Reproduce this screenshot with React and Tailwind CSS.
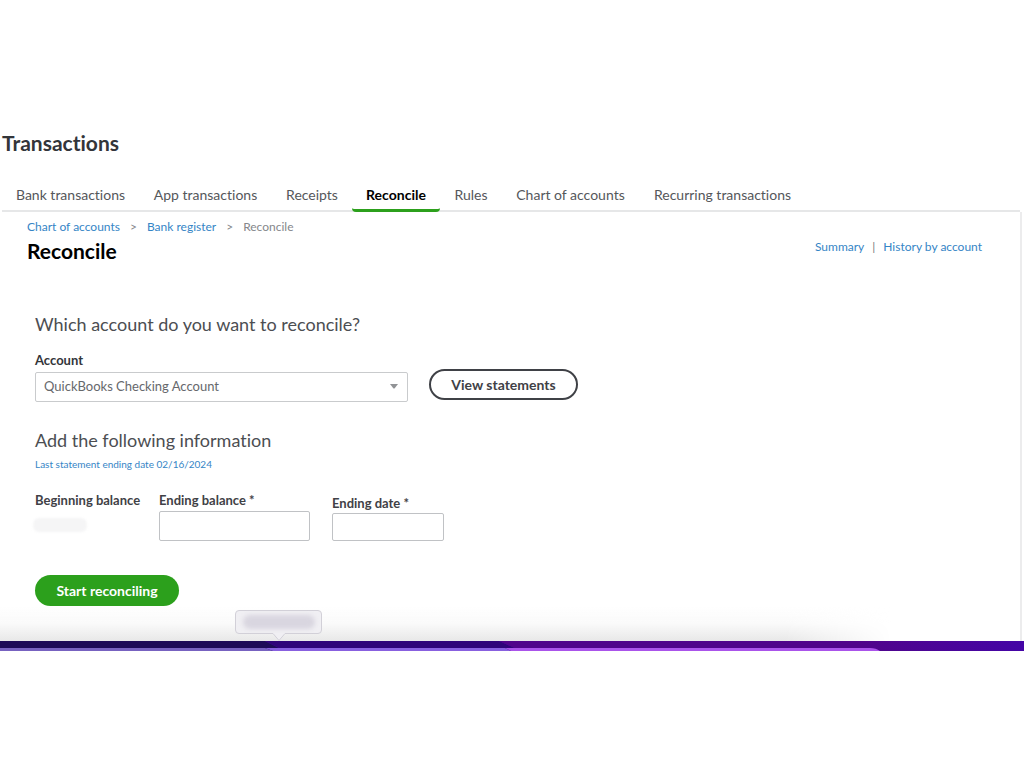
import React, { useState } from 'react';

const tabs = [
  { label: 'Bank transactions', width: 'w-[137px]' },
  { label: 'App transactions', width: 'w-[133px]' },
  { label: 'Receipts', width: 'w-20' },
  { label: 'Reconcile', width: 'w-[88px]' },
  { label: 'Rules', width: 'w-[62px]' },
  { label: 'Chart of accounts', width: 'w-[137px]' },
  { label: 'Recurring transactions', width: 'w-[167px]' },
];

function Tabs({ active }) {
  return (
    <nav className="mt-6 ml-0.5 mr-1 flex border-b-2 border-[#e6e7e8]">
      {tabs.map((tab) => (
        <a
          key={tab.label}
          href="#"
          className={`${tab.width} -mb-0.5 shrink-0 whitespace-nowrap rounded-sm border-b-3 text-center text-[14px] leading-7 ${
            tab.label === active ? 'border-[#2ca01c] font-bold text-black' : 'border-transparent text-[#55575b]'
          }`}
        >
          {tab.label}
        </a>
      ))}
    </nav>
  );
}

function PageHeader() {
  return (
    <div className="flex items-start justify-between pl-[25px] pr-[38px]">
      <div>
        <div className="flex gap-2.5 text-[12px] leading-5 text-[#85878b]">
          <a href="#" className="text-[#3585c6]">Chart of accounts</a>
          <span>&gt;</span>
          <a href="#" className="text-[#3585c6]">Bank register</a>
          <span>&gt;</span>
          <span>Reconcile</span>
        </div>
        <h2 className="text-[21px] font-bold leading-7 text-black">Reconcile</h2>
      </div>
      <div className="mt-5 flex gap-2 text-[12px] leading-5 text-[#77797d]">
        <a href="#" className="text-[#3585c6]">Summary</a>
        <span>|</span>
        <a href="#" className="text-[#3585c6]">History by account</a>
      </div>
    </div>
  );
}

function ReconcileForm() {
  const [account, setAccount] = useState('checking');

  return (
    <form className="mt-[45px] pl-[33px]">
      <h3 className="text-[18px] leading-7 text-[#4c4e52]">Which account do you want to reconcile?</h3>

      <div className="mt-3 flex items-end">
        <div className="w-[373px]">
          <label htmlFor="account" className="block text-[13px] font-bold leading-5 text-[#33353a]">Account</label>
          <div className="relative mt-0.5">
            <select
              id="account"
              value={account}
              onChange={(e) => setAccount(e.target.value)}
              className="h-[30px] w-full appearance-none rounded-[2px] border border-[#c9cbcd] bg-white px-2 text-[13px] text-[#66686c]"
            >
              <option value="checking">QuickBooks Checking Account</option>
            </select>
            <svg viewBox="0 0 8 5" className="pointer-events-none absolute right-2.5 top-3 h-[5px] w-2">
              <path d="M0 0h8L4.5 4.6h-1z" fill="#919396" />
            </svg>
          </div>
        </div>
        <button type="button" className="mb-0.5 ml-[21px] h-[31px] w-[149px] rounded-full border-2 border-[#3f4146] text-[14px] font-bold leading-5 text-[#3f4146]">
          View statements
        </button>
      </div>

      <h3 className="mt-6 text-[18px] leading-7 text-[#4c4e52]">Add the following information</h3>
      <a href="#" className="block text-[10px] leading-5 text-[#3585c6]">Last statement ending date 02/16/2024</a>

      <div className="mt-4 flex items-end text-[13px] font-bold leading-5 text-[#3f4146]">
        <div className="w-[124px] self-start">
          <span className="block">Beginning balance</span>
          <div className="-ml-0.5 mt-2 h-3.5 w-[54px] rounded-md bg-[#f5f5f6] blur-[1px]" />
        </div>
        <div className="w-[151px]">
          <label htmlFor="ending-balance" className="block">Ending balance *</label>
          <input id="ending-balance" type="text" className="mt-px block h-[30px] w-full rounded-[2px] border border-[#c0c2c5] bg-white px-2" />
        </div>
        <div className="ml-[22px] w-28">
          <label htmlFor="ending-date" className="block">Ending date *</label>
          <input id="ending-date" type="text" className="block h-7 w-full rounded-[2px] border border-[#c0c2c5] bg-white px-2" />
        </div>
      </div>

      <button type="button" className="mt-[34px] block h-[31px] w-36 rounded-full bg-[#2ca01c] text-[14px] font-bold leading-5 text-white">
        Start reconciling
      </button>
    </form>
  );
}

// Shadow above the bottom bar, with the tooltip pointing down at it
function BottomShadow() {
  return (
    <div className="relative h-[35px]">
      <div className="absolute inset-y-0 left-[-2px] right-32 bg-linear-to-b from-transparent via-[#fafafa] to-[#e8e8e8] mask-r-from-88% mask-r-to-100%" />
      <div className="absolute left-[233px] top-1 h-6 w-[87px] rounded-[4px] border border-[#d2d0d8] bg-[#f0eff3]">
        <div className="mx-auto mt-1 h-3.5 w-[72px] rounded-full bg-[#d9d6e0] blur-[2px]" />
        <svg viewBox="0 0 14 8" className="absolute left-9 top-[22px] h-2 w-3.5">
          <path d="M0 0h14L7 8z" fill="#f0eff3" />
          <path d="M0 .5h1L7 7.5 13 .5h1" fill="none" stroke="#d2d0d8" />
        </svg>
      </div>
    </div>
  );
}

function BottomBar() {
  return (
    <div className="flex h-2.5 items-end bg-[#4405a6]">
      <svg viewBox="0 0 1024 10" preserveAspectRatio="none" className="h-2.5 w-full">
        <defs>
          <linearGradient id="bar-end" x1="0" x2="1">
            <stop offset="0" stopColor="#50048b" />
            <stop offset="1" stopColor="#4405a6" />
          </linearGradient>
        </defs>
        <path d="M0 0h265l20 10H0z" fill="#1d0b58" />
        <path d="M265 0h234l22 10H285z" fill="#2f047a" />
        <path d="M499 0h370l20 10H521z" fill="#50048b" />
        <path d="M860 0h164v10H860z" fill="url(#bar-end)" />
        <path d="M0 7h265l8 3H0z" fill="#7762c0" />
        <path d="M265 7h240l6 3H273z" fill="#8860df" />
        <path d="M505 7h365q6 0 10 3H511z" fill="#aa54ea" />
      </svg>
    </div>
  );
}

function App() {
  return (
    <div className="bg-white pt-[129px] font-['Lato',sans-serif] [font-variant-ligatures:none]">
      <h1 className="pl-0.5 text-[21px] font-bold leading-7 text-[#33353a]">Transactions</h1>
      <Tabs active="Reconcile" />
      <main className="ml-0.5 mr-0.5 border-r-2 border-[#ececed] pt-[5px]">
        <PageHeader />
        <ReconcileForm />
        <BottomShadow />
      </main>
      <BottomBar />
    </div>
  );
}

export default App;
